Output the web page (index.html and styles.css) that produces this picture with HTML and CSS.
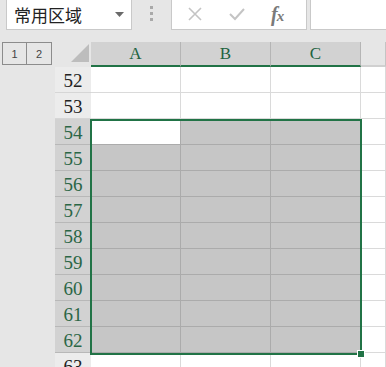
FILE: index.html
```html
<!DOCTYPE html>
<html lang="zh-CN">
<head>
    <meta charset="UTF-8">
    <title>常用区域</title>
    <link rel="stylesheet" href="styles.css">
</head>
<body>
    <div class="toolbar">
        <div class="namebox">
            <span class="name">常用区域</span>
            <svg class="drop" width="9" height="5" viewBox="0 0 9 5"><path d="M0 0h9L4.5 5z" fill="#6a6a6a"/></svg>
        </div>
        <div class="grip"><i></i><i></i><i></i></div>
        <div class="fbuttons">
            <svg class="fbtn" width="14" height="14" viewBox="0 0 14 14"><path d="M1 1L13 13M13 1L1 13" stroke="#c4c4c4" stroke-width="1.6"/></svg>
            <svg class="fbtn" width="16" height="14" viewBox="0 0 16 14"><path d="M1 7L6 12L15 2" stroke="#c4c4c4" stroke-width="2" fill="none"/></svg>
            <span class="fx">f<small>x</small></span>
        </div>
        <div class="formula"></div>
    </div>

    <div class="sheet">
        <div class="side">
            <div class="levels"><span>1</span><span>2</span></div>
        </div>
        <div class="grid">
            <div class="corner"><svg width="18" height="18" viewBox="0 0 18 18"><path d="M18 0V18H0z" fill="#bdbdbd"/></svg></div>
            <div class="colhead sel">A</div>
            <div class="colhead sel">B</div>
            <div class="colhead sel">C</div>
            <div class="colhead"></div>

            <div class="rowhead">52</div><div class="cell"></div><div class="cell"></div><div class="cell"></div><div class="cell"></div>
            <div class="rowhead">53</div><div class="cell"></div><div class="cell"></div><div class="cell"></div><div class="cell"></div>
            <div class="rowhead sel">54</div><div class="cell active"></div><div class="cell sel"></div><div class="cell sel"></div><div class="cell"></div>
            <div class="rowhead sel">55</div><div class="cell sel"></div><div class="cell sel"></div><div class="cell sel"></div><div class="cell"></div>
            <div class="rowhead sel">56</div><div class="cell sel"></div><div class="cell sel"></div><div class="cell sel"></div><div class="cell"></div>
            <div class="rowhead sel">57</div><div class="cell sel"></div><div class="cell sel"></div><div class="cell sel"></div><div class="cell"></div>
            <div class="rowhead sel">58</div><div class="cell sel"></div><div class="cell sel"></div><div class="cell sel"></div><div class="cell"></div>
            <div class="rowhead sel">59</div><div class="cell sel"></div><div class="cell sel"></div><div class="cell sel"></div><div class="cell"></div>
            <div class="rowhead sel">60</div><div class="cell sel"></div><div class="cell sel"></div><div class="cell sel"></div><div class="cell"></div>
            <div class="rowhead sel">61</div><div class="cell sel"></div><div class="cell sel"></div><div class="cell sel"></div><div class="cell"></div>
            <div class="rowhead sel">62</div><div class="cell sel"></div><div class="cell sel"></div><div class="cell sel"></div><div class="cell"></div>
            <div class="rowhead">63</div><div class="cell"></div><div class="cell"></div><div class="cell"></div><div class="cell"></div>

            <div class="selection"><span class="handle"></span></div>
        </div>
    </div>
</body>
</html>
```

FILE: styles.css
```css
body {
    margin: 0;
    background: #e6e6e6;
    height: 367px;
    overflow: hidden;
    font-family: "Liberation Serif", serif;
}

.toolbar {
    display: flex;
    height: 30px;
    margin-bottom: 12px;
}
.namebox {
    width: 126px;
    margin-left: 6px;
    box-sizing: border-box;
    background: #fff;
    border: 1px solid #c9c9c9;
    border-top: none;
    display: flex;
    align-items: center;
    padding: 0 0 1px 7px;
}
.name {
    flex: 1;
    font-family: "Noto Sans CJK SC", sans-serif;
    font-size: 17px;
    color: #222;
}
.drop {
    margin-right: 7px;
}
.grip {
    width: 39px;
    display: flex;
    flex-direction: column;
    align-items: center;
    justify-content: center;
    gap: 3px;
    padding-bottom: 3px;
}
.grip i {
    width: 3px;
    height: 3px;
    background: #a9a9a9;
}
.fbuttons {
    width: 136px;
    box-sizing: border-box;
    background: #fff;
    border: 1px solid #c9c9c9;
    border-top: none;
    display: flex;
    align-items: center;
    padding: 0 0 1px 16px;
    gap: 27px;
}
.fx {
    font-style: italic;
    font-weight: bold;
    font-size: 20px;
    color: #7a7a7a;
    margin-left: -1px;
    letter-spacing: -1px;
}
.fx small {
    font-size: 15px;
}
.formula {
    flex: 1;
    margin-left: 3px;
    background: #fff;
    border: 1px solid #c9c9c9;
    border-top: none;
    border-right: none;
}

.sheet {
    display: flex;
}
.side {
    width: 55px;
}
.levels {
    display: flex;
    margin-left: 2px;
}
.levels span {
    width: 25px;
    height: 23px;
    box-sizing: border-box;
    border: 1px solid #8c8c8c;
    font-family: "Liberation Sans", sans-serif;
    font-size: 11px;
    color: #444;
    display: flex;
    align-items: center;
    justify-content: center;
}
.levels span + span {
    border-left: none;
}

.grid {
    position: relative;
    flex: 1;
    display: grid;
    grid-template-columns: 36px 90px 90px 90px 1fr;
    grid-auto-rows: 26px;
    grid-template-rows: 25px;
}
.corner {
    display: flex;
    align-items: flex-end;
    justify-content: flex-end;
    padding: 0 2px 3px 0;
    border-bottom: 2px solid #e6e6e6;
}
.colhead {
    background: #e6e6e6;
    border-right: 1px solid #c4c4c4;
    border-bottom: 2px solid #d0d0d0;
    font-size: 17px;
    text-align: center;
    line-height: 23px;
}
.colhead.sel {
    background: #d2d2d2;
    color: #21633f;
    border-bottom-color: #217346;
    border-right-color: #b5b5b5;
}
.colhead:last-child {
    border-right: none;
}
.rowhead {
    background: #ececec;
    border-bottom: 1px solid #d6d6d6;
    font-size: 19px;
    color: #222;
    text-align: center;
    line-height: 27px;
}
.rowhead.sel {
    background: #d2d2d2;
    color: #2b6646;
    border-bottom-color: #b8b8b8;
}
.cell {
    background: #fff;
    border-right: 1px solid #dadada;
    border-bottom: 1px solid #dadada;
}
.cell.sel {
    background: #c6c6c6;
    border-color: #ababab;
}
.cell.active {
    border-color: #ababab;
}

.selection {
    position: absolute;
    left: 35px;
    top: 77px;
    width: 272px;
    height: 236px;
    box-sizing: border-box;
    border: 2px solid #217346;
    pointer-events: none;
}
.handle {
    position: absolute;
    right: -5px;
    bottom: -5px;
    width: 6px;
    height: 6px;
    background: #217346;
    border: 1px solid #fff;
}
```
